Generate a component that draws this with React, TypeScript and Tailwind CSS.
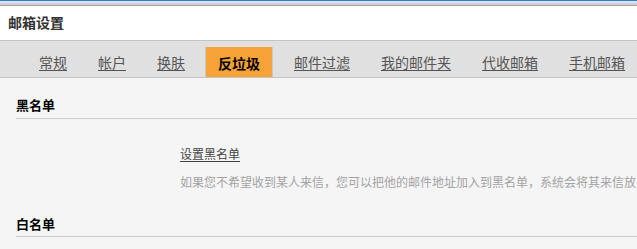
import React from "react";

const tabs = [
  { label: "常规", ml: "ml-[27px]", w: "w-[52px]" },
  { label: "帐户", ml: "ml-[7px]", w: "w-[52px]" },
  { label: "换肤", ml: "ml-[7px]", w: "w-[52px]" },
  { label: "反垃圾", ml: "ml-[8px]", w: "w-[68px]", active: true },
  { label: "邮件过滤", ml: "ml-[9px]", w: "w-[80px]" },
  { label: "我的邮件夹", ml: "ml-[7px]", w: "w-[94px]" },
  { label: "代收邮箱", ml: "ml-[7px]", w: "w-[80px]" },
  { label: "手机邮箱", ml: "ml-[7px]", w: "w-[80px]" },
];

export default function App() {
  return (
    <div className="w-[637px] h-[249px] overflow-hidden bg-[#f5f5f5] font-['Noto_Sans_CJK_SC','Noto_Sans',sans-serif]">
      <div className="h-px bg-[#2f7bd6]" />
      <div className="h-[4px] bg-gradient-to-b from-[#e4e9ef] to-[#c9cdd2]" />
      <div className="h-px bg-[#a3a3a3]" />
      <div className="h-[34px] bg-white flex items-center pl-2 pb-[3px]">
        <span className="text-[14px] leading-[14px] font-bold text-[#333]">邮箱设置</span>
      </div>
      <div className="h-[38px] bg-[#e0e0e0] border-t border-b border-[#c3c3c3] flex items-end overflow-hidden">
        {tabs.map((t) => (
          <div
            key={t.label}
            className={`${t.ml} ${t.w} shrink-0 flex items-center justify-center whitespace-nowrap text-[14px] leading-[14px] ${
              t.active
                ? "bg-[#f7a338] border-x border-[#c9c9c9] font-bold text-black -mb-px h-[31px]"
                : "h-[30px] text-[#555] underline underline-offset-2"
            }`}
          >
            {t.label}
          </div>
        ))}
      </div>
      <div className="ml-4">
        <div className="pt-[20px] pb-[6px] border-b border-[#cccccc]">
          <span className="text-[13px] leading-[14px] font-bold text-black block">黑名单</span>
        </div>
        <div className="pl-[164px] pt-[27px] whitespace-nowrap">
          <div className="text-[12px] leading-[16px] text-[#444] underline underline-offset-2">设置黑名单</div>
          <div className="mt-[12px] text-[12px] leading-[16px] text-[#a3a3a3]">
            如果您不希望收到某人来信，您可以把他的邮件地址加入到黑名单，系统会将其来信放
          </div>
        </div>
        <div className="pt-[27px] pb-[5px] border-b border-[#cccccc]">
          <span className="text-[13px] leading-[14px] font-bold text-black block">白名单</span>
        </div>
      </div>
    </div>
  );
}
